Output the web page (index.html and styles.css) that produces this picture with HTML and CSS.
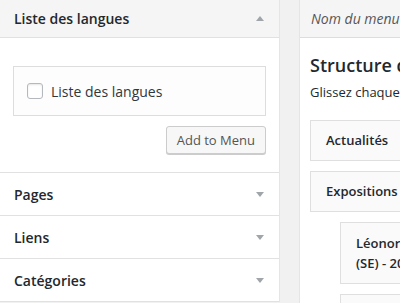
FILE: index.html
```html
<!DOCTYPE html>
<html lang="fr">
<head>
  <meta charset="UTF-8">
  <title>Menus</title>
  <link rel="stylesheet" href="styles.css">
</head>
<body>
  <div class="page">
    <div class="sidebar">
      <div class="section open">
        <div class="section-head">Liste des langues <span class="arrow up"></span></div>
        <div class="section-body">
          <div class="check-box">
            <label><input type="checkbox"> Liste des langues</label>
          </div>
          <div class="actions">
            <button class="btn">Add to Menu</button>
          </div>
        </div>
      </div>
      <div class="section">
        <div class="section-head">Pages <span class="arrow"></span></div>
      </div>
      <div class="section">
        <div class="section-head">Liens <span class="arrow"></span></div>
      </div>
      <div class="section">
        <div class="section-head">Catégories <span class="arrow"></span></div>
      </div>
    </div>

    <div class="main">
      <div class="main-head">Nom du menu</div>
      <div class="main-body">
        <h3>Structure du menu</h3>
        <p>Glissez chaque élément pour les placer dans l'ordre que vous préférez.</p>
        <ul class="menu-items">
          <li class="item">Actualités</li>
          <li class="item">Expositions</li>
          <li class="item sub">Léonor Fini, Musée d'Art Moderne de Stockholm<br>(SE) - 2016</li>
          <li class="item sub">Catalogues</li>
        </ul>
      </div>
    </div>
  </div>
</body>
</html>
```

FILE: styles.css
```css
body {
  margin: 0;
  background: #f1f1f1;
  font-family: "Open Sans", "Liberation Sans", sans-serif;
  color: #23282d;
  overflow: hidden;
}
.page {
  display: flex;
  height: 303px;
}
.sidebar {
  width: 279px;
  flex-shrink: 0;
  background: #fff;
  border-right: 1px solid #e5e5e5;
  align-self: flex-start;
}
.section {
  border-bottom: 1px solid #e1e1e1;
}
.section-head {
  display: flex;
  justify-content: space-between;
  align-items: center;
  height: 42px;
  padding: 0 15px 0 14px;
  font-size: 14px;
  font-weight: 600;
}
.open .section-head {
  height: 37px;
  background: #f5f5f5;
  border-bottom: 1px solid #e1e1e1;
}
.arrow {
  width: 0;
  height: 0;
  border-left: 4px solid transparent;
  border-right: 4px solid transparent;
  border-top: 5px solid #a0a5aa;
}
.arrow.up {
  border-top: none;
  border-bottom: 5px solid #a0a5aa;
}
.section-body {
  padding: 28px 13px 18px;
}
.check-box {
  display: flex;
  align-items: center;
  height: 48px;
  padding-left: 13px;
  border: 1px solid #dddddd;
  background: #fdfdfd;
}
.check-box label {
  display: flex;
  align-items: center;
  font-size: 14px;
  color: #32373c;
}
.check-box input {
  appearance: none;
  width: 16px;
  height: 16px;
  margin: 0 8px 0 0;
  border: 1px solid #b4b9be;
  border-radius: 3px;
  background: #fff;
  box-shadow: inset 0 1px 2px rgba(0, 0, 0, 0.1);
}
.actions {
  display: flex;
  justify-content: flex-end;
  margin-top: 10px;
}
.btn {
  height: 28px;
  padding: 0 10px;
  font-family: inherit;
  font-size: 13px;
  color: #555;
  background: #f7f7f7;
  border: 1px solid #cccccc;
  border-radius: 3px;
  box-shadow: 0 1px 0 #cccccc;
}
.main {
  flex: 1;
  margin-left: 19px;
  background: #fff;
  border-left: 1px solid #e5e5e5;
  min-width: 0;
}
.main-head {
  height: 37px;
  line-height: 37px;
  padding-left: 11px;
  background: #f5f5f5;
  border-bottom: 1px solid #dddddd;
  font-size: 14px;
  font-style: italic;
  color: #555;
  white-space: nowrap;
}
.main-body {
  padding: 0 10px;
  white-space: nowrap;
}
h3 {
  margin: 14px 0 0;
  font-size: 18px;
  font-weight: 600;
  line-height: 26px;
}
p {
  margin: 5px 0 0;
  font-size: 13px;
  line-height: 18px;
}
.menu-items {
  list-style: none;
  margin: 19px 0 0;
  padding: 0;
}
.item {
  width: 380px;
  margin-bottom: 10px;
  padding: 10px 15px;
  border: 1px solid #dfdfdf;
  background: #fafafa;
  font-size: 13px;
  font-weight: 600;
  line-height: 19px;
}
.item.sub {
  margin-left: 30px;
  line-height: 20px;
}
```
